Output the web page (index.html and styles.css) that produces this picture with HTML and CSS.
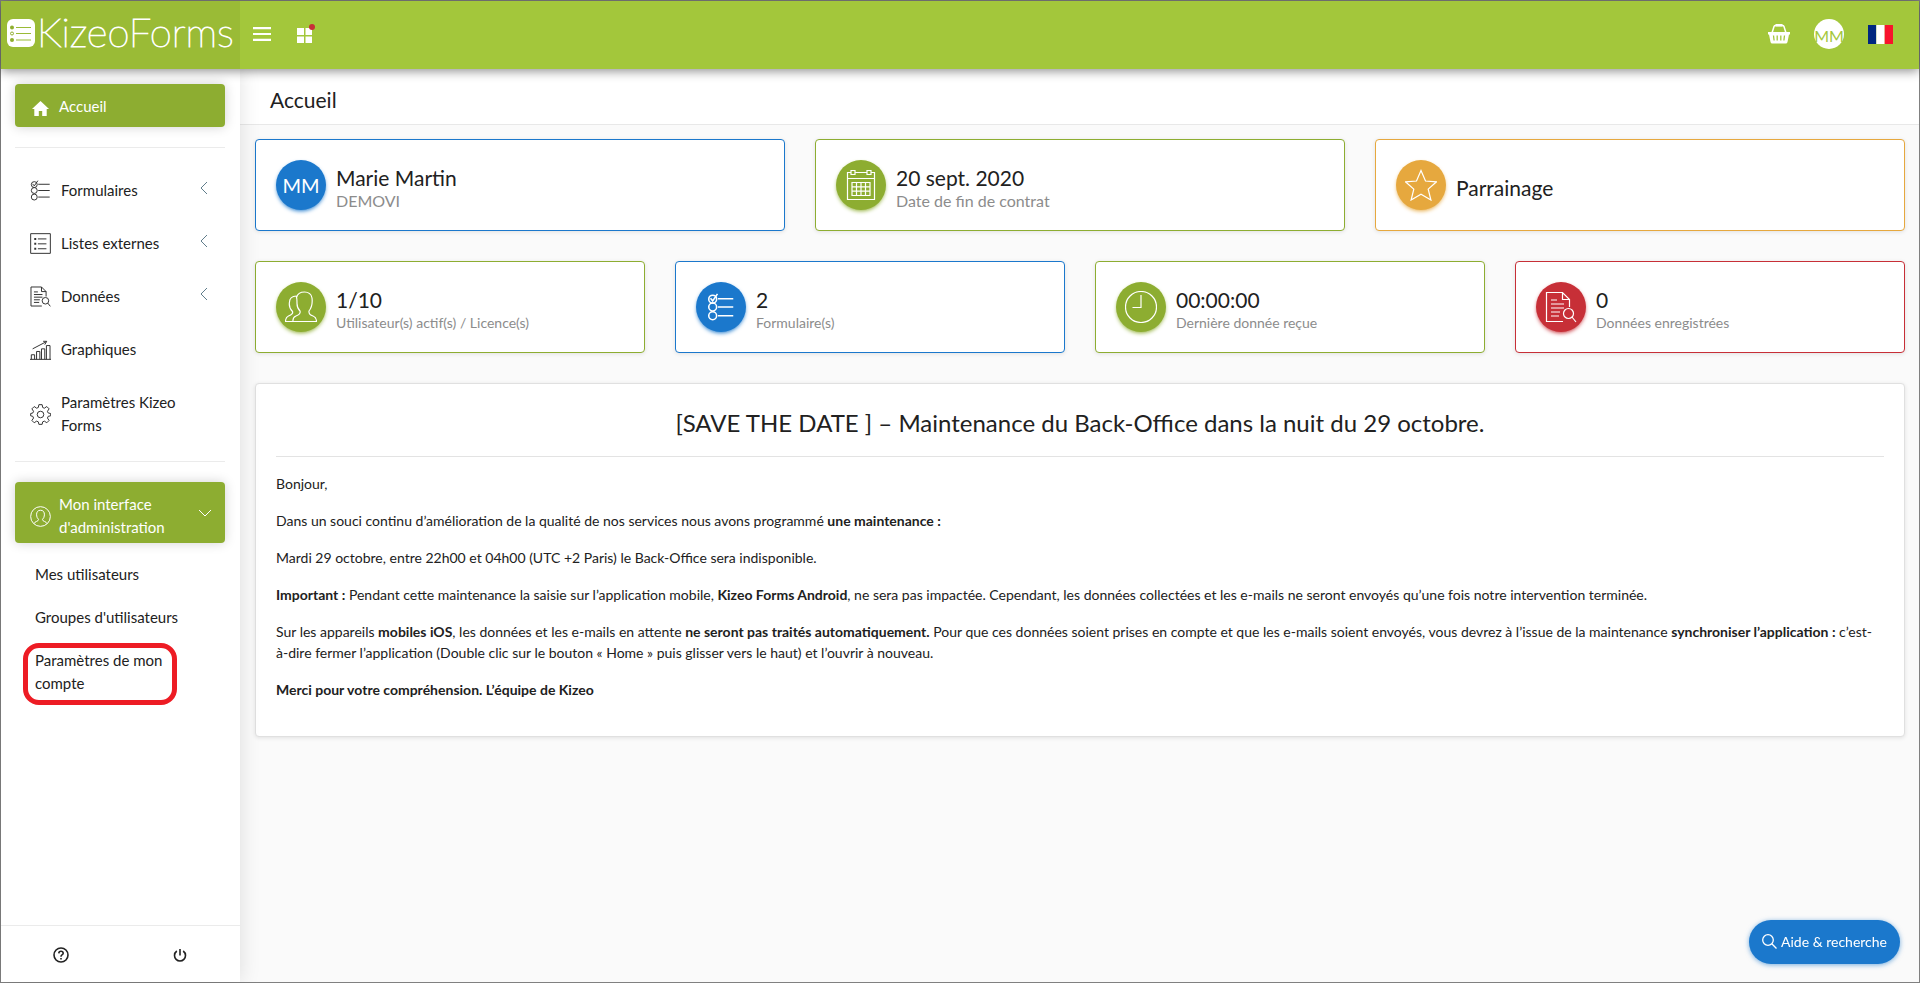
FILE: index.html
```html
<!DOCTYPE html>
<html lang="fr">
<head>
<meta charset="utf-8">
<title>Kizeo Forms – Accueil</title>
<link rel="stylesheet" href="styles.css">
</head>
<body>
<svg class="sprite" aria-hidden="true">
  <symbol id="i-checklist" viewBox="0 0 32 32">
    <circle cx="6.500" cy="7" r="4.500"/><circle cx="6.500" cy="16" r="4.500"/><circle cx="6.500" cy="26" r="4.500"/>
    <path d="M4 6l2.500 3L12 1M12.500 6.500H30M12.500 16H30M12.500 26H30"/>
  </symbol>
  <symbol id="i-doc" viewBox="0 0 32 32">
    <path d="M18 30.500H1.500V1.500h16l7 7V16M17.500 1.500v7h7M6 9h6M6 13h13M6 17h13M6 21h9M6 25h8"/>
    <circle cx="23.500" cy="22.500" r="5"/><path d="M27 26l4 5"/>
  </symbol>
</svg>
<div class="app">
  <header class="topbar">
    <a class="brand" href="#">
      <svg class="brand-mark" viewBox="0 0 28 28" aria-hidden="true">
        <rect width="28" height="28" rx="6" fill="#fff"/>
        <g fill="#8fae2f"><circle cx="5" cy="8.500" r="2"/><circle cx="5" cy="21" r="2"/></g>
        <circle cx="5" cy="14.500" r="1.500" fill="none" stroke="#8fae2f"/>
        <path d="M9 8.500h15M9 14.500h15M9 21h15" stroke="#9abb36" stroke-width="1.200"/>
      </svg>
      <span class="brand-name">KizeoForms</span>
    </a>
    <button class="icon-btn menu" aria-label="Menu">
      <svg width="18" height="14" viewBox="0 0 18 14"><path d="M0 1.200h18M0 7h18M0 12.800h18" stroke="#fff" stroke-width="2.200"/></svg>
    </button>
    <button class="icon-btn apps" aria-label="Applications">
      <svg width="18" height="19" viewBox="0 0 18 19"><path d="M0 4h7v7H0zM8.500 4H15v7H8.500zM0 12.500h7V19H0zM8.500 12.500H15V19H8.500z" fill="#fff"/><circle cx="15" cy="3" r="3" fill="#c72f37"/></svg>
    </button>
    <div class="topbar-end">
      <button class="icon-btn" aria-label="Panier">
        <svg width="22" height="20" viewBox="0 0 22 20"><path d="M4 9l2-6.500Q6.400 1.500 7.500 1.500h7q1.100 0 1.500 1L18 9" fill="none" stroke="#fff" stroke-width="1.500"/><path d="M7.500 0h7v2.500h-7zM0 8h22v2.400H21L19.500 18q-.3 1.500-1.800 1.500H4.300Q2.800 19.500 2.500 18L1 10.400H0z" fill="#fff"/><path d="M5.500 11.500l.6 5M9.200 11.500v5M12.800 11.500v5M16.500 11.500l-.6 5" stroke="#a3c73b" stroke-width="1.300"/></svg>
      </button>
      <button class="user">MM</button>
      <button class="icon-btn" aria-label="Français">
        <svg width="25" height="19" viewBox="0 0 25 19"><path fill="#002780" d="M0 0h8.300v19H0z"/><path fill="#fff" d="M8.300 0h8.400v19H8.300z"/><path fill="#f8132c" d="M16.700 0H25v19h-8.300z"/></svg>
      </button>
    </div>
  </header>

  <div class="body">
    <aside class="sidebar">
      <nav class="nav">
        <a class="item active home" href="#">
          <svg class="ico small" viewBox="0 0 17 15"><path d="M8.500 0L17 8h-2.300v7h-4.500v-5H6.800v5H2.300V8H0z" fill="#fff"/></svg>
          <span class="label">Accueil</span>
        </a>
        <hr class="rule">
        <a class="item" href="#"><svg class="ico line"><use href="#i-checklist"/></svg><span class="label">Formulaires</span><svg class="chev" viewBox="0 0 12 12"><path d="M9 0L3 6l6 6"/></svg></a>
        <a class="item" href="#"><svg class="ico line" viewBox="0 0 32 32"><path d="M1 1h30v30H1zM12 9h13M12 16.500h13M12 24h13"/><path d="M6.500 9h3M6.500 16.500h3M6.500 24h3" stroke-width="3"/></svg><span class="label">Listes externes</span><svg class="chev" viewBox="0 0 12 12"><path d="M9 0L3 6l6 6"/></svg></a>
        <a class="item" href="#"><svg class="ico line"><use href="#i-doc"/></svg><span class="label">Données</span><svg class="chev" viewBox="0 0 12 12"><path d="M9 0L3 6l6 6"/></svg></a>
        <a class="item" href="#"><svg class="ico line" viewBox="0 0 32 32"><path d="M0 31h32M2 31v-7h5v7M10 31V19h5v12M17.500 31V15h5v16M25 31v-21h5.500v21M4 15L25 4M20 3.500l5.500 0-3 5"/></svg><span class="label">Graphiques</span></a>
        <a class="item" href="#"><svg class="ico line" viewBox="0 0 32 32"><circle cx="16" cy="16" r="5"/><path d="M13.500 1h5l.8 4.300 2.600 1.100 3.700-2.500 3.500 3.500-2.500 3.700 1.100 2.600 3.800.8v3.500l-3.800.8-1.100 2.600 2.500 3.700-3.500 3.500-3.700-2.500-2.600 1.100-.8 3.800h-5l-.8-3.800-2.600-1.100-3.700 2.500-3.500-3.500 2.500-3.700-1.100-2.600L1 18v-3.500l3.300-.8 1.100-2.600-2.500-3.700 3.500-3.500 3.700 2.500 2.600-1.100z" stroke-linejoin="round"/></svg><span class="label">Paramètres Kizeo Forms</span></a>
        <hr class="rule second">
        <a class="item active admin" href="#"><svg class="ico line" viewBox="0 0 32 32"><circle cx="16" cy="16" r="15"/><path d="M6 27q1-2.500 4-3.500 3-1 3-3-3-3-3-7 0-7 6-7t6 7q0 4-3 7 0 2 3 3 3 1 4 3.500"/></svg><span class="label">Mon interface d'administration</span><svg class="chev" viewBox="0 0 12 12"><path d="M0 3l6 6 6-6"/></svg></a>
        <a class="sub" href="#">Mes utilisateurs</a>
        <a class="sub" href="#">Groupes d'utilisateurs</a>
        <a class="sub marked" href="#">Paramètres de mon compte</a>
      </nav>
      <div class="side-foot">
        <button class="icon-btn" aria-label="Aide"><svg width="16" height="16" viewBox="0 0 16 16" fill="none" stroke="#222" stroke-width="1.600"><circle cx="8" cy="8" r="7"/><path d="M5.800 6.400Q5.900 4.300 8 4.300t2.200 1.900Q10.200 7.200 9 7.900 8 8.500 8 9.700M8 11v1.600"/></svg></button>
        <button class="icon-btn" aria-label="Déconnexion"><svg width="14" height="14" viewBox="0 0 14 14" fill="none" stroke="#222" stroke-width="1.600"><path d="M7 1v6.500M3.800 3Q1.500 4.700 1.500 7.500A5.500 5.500 0 0 0 12.500 7.500Q12.500 4.700 10.200 3"/></svg></button>
      </div>
    </aside>

    <main class="main">
      <h1 class="page-title">Accueil</h1>
      <div class="content">
        <div class="row three">
          <section class="card blue"><span class="badge">MM</span><div class="card-text"><h2>Marie Martin</h2><p>DEMOVI</p></div></section>
          <section class="card green"><span class="badge"><svg viewBox="0 0 32 32"><path d="M6 3.500H2.500v27h27v-27H26M10 3.500h12M2.500 9.500h27M6 1.500h4v4H6zM22 1.500h4v4h-4zM7 13.500h18v13H7zM7 17.800h18M7 22.200h18M11.500 13.500v13M16 13.500v13M20.500 13.500v13"/></svg></span><div class="card-text"><h2>20 sept. 2020</h2><p>Date de fin de contrat</p></div></section>
          <section class="card amber"><span class="badge"><svg viewBox="0 0 32 32"><path d="M16 1.500l4.500 10.500 11 .8-8.300 7.300 2.700 10.900L16 25.200 6.100 31l2.700-10.900L.5 12.800l11-.8z"/></svg></span><div class="card-text"><h2>Parrainage</h2></div></section>
        </div>
        <div class="row four">
          <section class="card green"><span class="badge"><svg viewBox="0 0 32 32"><path d="M8 30.500q-.5-4 3-5.500 5-1.800 4-5-3-3-3-7.500 0-5-.5-6Q13 1 19.500 1T27 7q1 8-3 13-.5 3.500 4 5 3.500 1.500 3.500 5.500zM8 30.500H.5q0-4 3-5.500 5-1.800 4-4.500-4-4-3-9.500 0-5.500 7-6"/></svg></span><div class="card-text"><h2>1/10</h2><p>Utilisateur(s) actif(s) / Licence(s)</p></div></section>
          <section class="card blue"><span class="badge"><svg class="bold"><use href="#i-checklist"/></svg></span><div class="card-text"><h2>2</h2><p>Formulaire(s)</p></div></section>
          <section class="card green"><span class="badge"><svg viewBox="0 0 32 32"><circle cx="16" cy="16" r="15.500"/><path d="M16 4v12.500H7.500"/></svg></span><div class="card-text"><h2>00:00:00</h2><p>Dernière donnée reçue</p></div></section>
          <section class="card red"><span class="badge"><svg><use href="#i-doc"/></svg></span><div class="card-text"><h2>0</h2><p>Données enregistrées</p></div></section>
        </div>
        <article class="news">
          <h2>[SAVE THE DATE ] – Maintenance du Back-Office dans la nuit du 29 octobre.</h2>
          <p>Bonjour,</p>
          <p>Dans un souci continu d’amélioration de la qualité de nos services nous avons programmé <strong>une maintenance :</strong></p>
          <p>Mardi 29 octobre, entre 22h00 et 04h00 (UTC +2 Paris) le Back-Office sera indisponible.</p>
          <p><strong>Important :</strong> Pendant cette maintenance la saisie sur l’application mobile, <strong>Kizeo Forms Android</strong>, ne sera pas impactée. Cependant, les données collectées et les e-mails ne seront envoyés qu’une fois notre intervention terminée.</p>
          <p>Sur les appareils <strong>mobiles iOS</strong>, les données et les e-mails en attente <strong>ne seront pas traités automatiquement.</strong> Pour que ces données soient prises en compte et que les e-mails soient envoyés, vous devrez à l’issue de la maintenance <strong>synchroniser l’application :</strong> c’est-à-dire fermer l’application (Double clic sur le bouton « Home » puis glisser vers le haut) et l’ouvrir à nouveau.</p>
          <p><strong>Merci pour votre compréhension. L’équipe de Kizeo</strong></p>
        </article>
      </div>
    </main>
  </div>
  <button class="help"><svg width="15" height="15" viewBox="0 0 15 15" fill="none" stroke="#fff" stroke-width="1.300"><circle cx="6" cy="6" r="5.300"/><path d="M9.800 9.800l4.700 4.700"/></svg>Aide &amp; recherche</button>
</div>
</body>
</html>
```
FILE: styles.css
```css
* { box-sizing: border-box; }
body {
  margin: 0;
  font: 15px/23px Lato, "Liberation Sans", sans-serif;
  color: #212121;
}
a { color: inherit; text-decoration: none; }
button { font: inherit; border: 0; background: none; padding: 0; cursor: pointer; }
h1, h2, p { margin: 0; font-weight: 400; }
svg { display: block; flex: none; }
.sprite { display: none; }

.app {
  min-height: 100vh;
  display: flex;
  flex-direction: column;
  border: 1px solid #808080;
  background: #fafafa;
}

/* Top bar */
.topbar {
  position: relative;
  z-index: 3;
  height: 68px;
  display: flex;
  align-items: center;
  background: #a3c73b;
  box-shadow: 0 2px 10px rgba(0, 0, 0, .45);
}
.brand {
  width: 239px;
  height: 100%;
  padding: 0 0 4px 6px;
  display: flex;
  align-items: center;
  gap: 2px;
  background: #9abb36;
  color: #fff;
}
.brand-mark { width: 28px; height: 28px; }
.brand-name {
  font-size: 40px;
  line-height: 40px;
  font-weight: 100;
  padding-bottom: 2px;
  -webkit-text-stroke: 1px #fff;
}
.icon-btn { display: flex; align-items: center; justify-content: center; }
.menu { margin: 0 0 2px 13px; }
.apps { margin: 0 0 4px 26px; }
.topbar-end { margin-left: auto; padding: 0 26px 2px 0; display: flex; align-items: center; }
.user {
  width: 30px;
  height: 30px;
  margin: 0 24px;
  border-radius: 50%;
  background: #fff;
  color: #a3c73b;
  font-size: 16px;
  line-height: 34px;
  text-align: center;
}

/* Sidebar */
.body { flex: 1; display: flex; }
.sidebar {
  position: relative;
  z-index: 2;
  width: 239px;
  flex: none;
  display: flex;
  flex-direction: column;
  background: #fff;
  box-shadow: 0 0 20px rgba(0, 0, 0, .12);
}
.nav { flex: 1; padding: 15px 15px 0 14px; display: flex; flex-direction: column; }
.item {
  display: flex;
  align-items: center;
  gap: 10px;
  padding: 10px 15px;
  margin-bottom: 10px;
  border-radius: 4px;
}
.item .label { flex: 1; }
.active { background: #8dad31; color: #fff; box-shadow: 0 0 12px rgba(0, 0, 0, .18); }
.home { margin-bottom: 20px; padding: 11px 15px 9px 17px; }
.admin { padding: 11px 14px 4px 15px; gap: 8px; }
.ico { width: 21px; height: 21px; fill: none; }
.ico.small { width: 17px; height: 15px; margin-top: 4px; }
.line { stroke: #333; stroke-width: 1.5; }
.chev { width: 12px; height: 12px; margin-bottom: 6px; fill: none; stroke: #607d8b; stroke-width: 1; }
.active .line, .active .chev { stroke: #fff; }
.rule { width: 100%; height: 1px; margin: 0 0 21px; border: 0; background: #ebebeb; }
.second { margin: 4px 0 20px; }
.sub { padding: 10px 40px 10px 20px; }
.marked { position: relative; }
.marked::after {
  content: "";
  position: absolute;
  inset: 4px 48px 0 8px;
  border: 5px solid #ed1c24;
  border-radius: 16px;
}
.side-foot {
  height: 57px;
  display: grid;
  grid-template-columns: 1fr 1fr;
  align-items: center;
  padding-top: 2px;
  border-top: 1px solid #ebebeb;
}

/* Main */
.main { flex: 1; min-width: 0; }
.page-title {
  height: 56px;
  padding: 15px 30px 0;
  font-size: 21px;
  line-height: 32px;
  background: #fff;
  border-bottom: 1px solid #e8e8e8;
}
.content { padding: 14px 14px 15px 15px; }
.row { display: grid; gap: 30px; margin-bottom: 30px; }
.three { grid-template-columns: repeat(3, 1fr); }
.four { grid-template-columns: repeat(4, 1fr); }
.card {
  height: 92px;
  display: flex;
  align-items: center;
  gap: 10px;
  padding: 0 20px;
  background: #fff;
  border: 1px solid var(--tone);
  border-radius: 4px;
  box-shadow: 0 1px 4px rgba(0, 0, 0, .1);
}
.card-text { padding-top: 5px; }
.card h2 { font-size: 21px; line-height: 26px; }
.card p { font-size: 16px; line-height: 20px; color: #8c8c8c; }
.four .card p { font-size: 14px; }
.blue { --tone: #1b78cc; }
.green { --tone: #8dad31; }
.amber { --tone: #e6a83e; }
.red { --tone: #c72f37; }
.badge {
  width: 50px;
  height: 50px;
  flex: none;
  display: flex;
  align-items: center;
  justify-content: center;
  border-radius: 50%;
  background: var(--tone);
  color: #fff;
  font-size: 20px;
  box-shadow: 0 2px 4px -1px var(--tone);
}
.badge svg { width: 32px; height: 32px; fill: none; stroke: #fff; stroke-width: 1.2; }
.badge .bold { width: 28px; height: 32px; stroke-width: 1.8; }
.news {
  padding: 20px 20px 36px;
  font-size: 14px;
  line-height: 21px;
  background: #fff;
  border: 1px solid #e0e0e0;
  border-radius: 4px;
  box-shadow: 0 1px 4px rgba(0, 0, 0, .1);
}
.news h2 {
  margin-bottom: 16px;
  padding-bottom: 14px;
  border-bottom: 1px solid #e3e3e3;
  font-size: 24px;
  line-height: 38px;
  text-align: center;
}
.news p { margin-bottom: 16px; }
.news p:last-child { margin-bottom: 0; }

.help {
  position: fixed;
  right: 20px;
  bottom: 19px;
  z-index: 4;
  height: 44px;
  padding: 0 13px 1px;
  display: flex;
  align-items: center;
  gap: 4px;
  border-radius: 22px;
  background: #1b78cc;
  color: #fff;
  font-size: 14px;
  box-shadow: 0 1px 5px rgba(27, 120, 204, .6);
}
```
